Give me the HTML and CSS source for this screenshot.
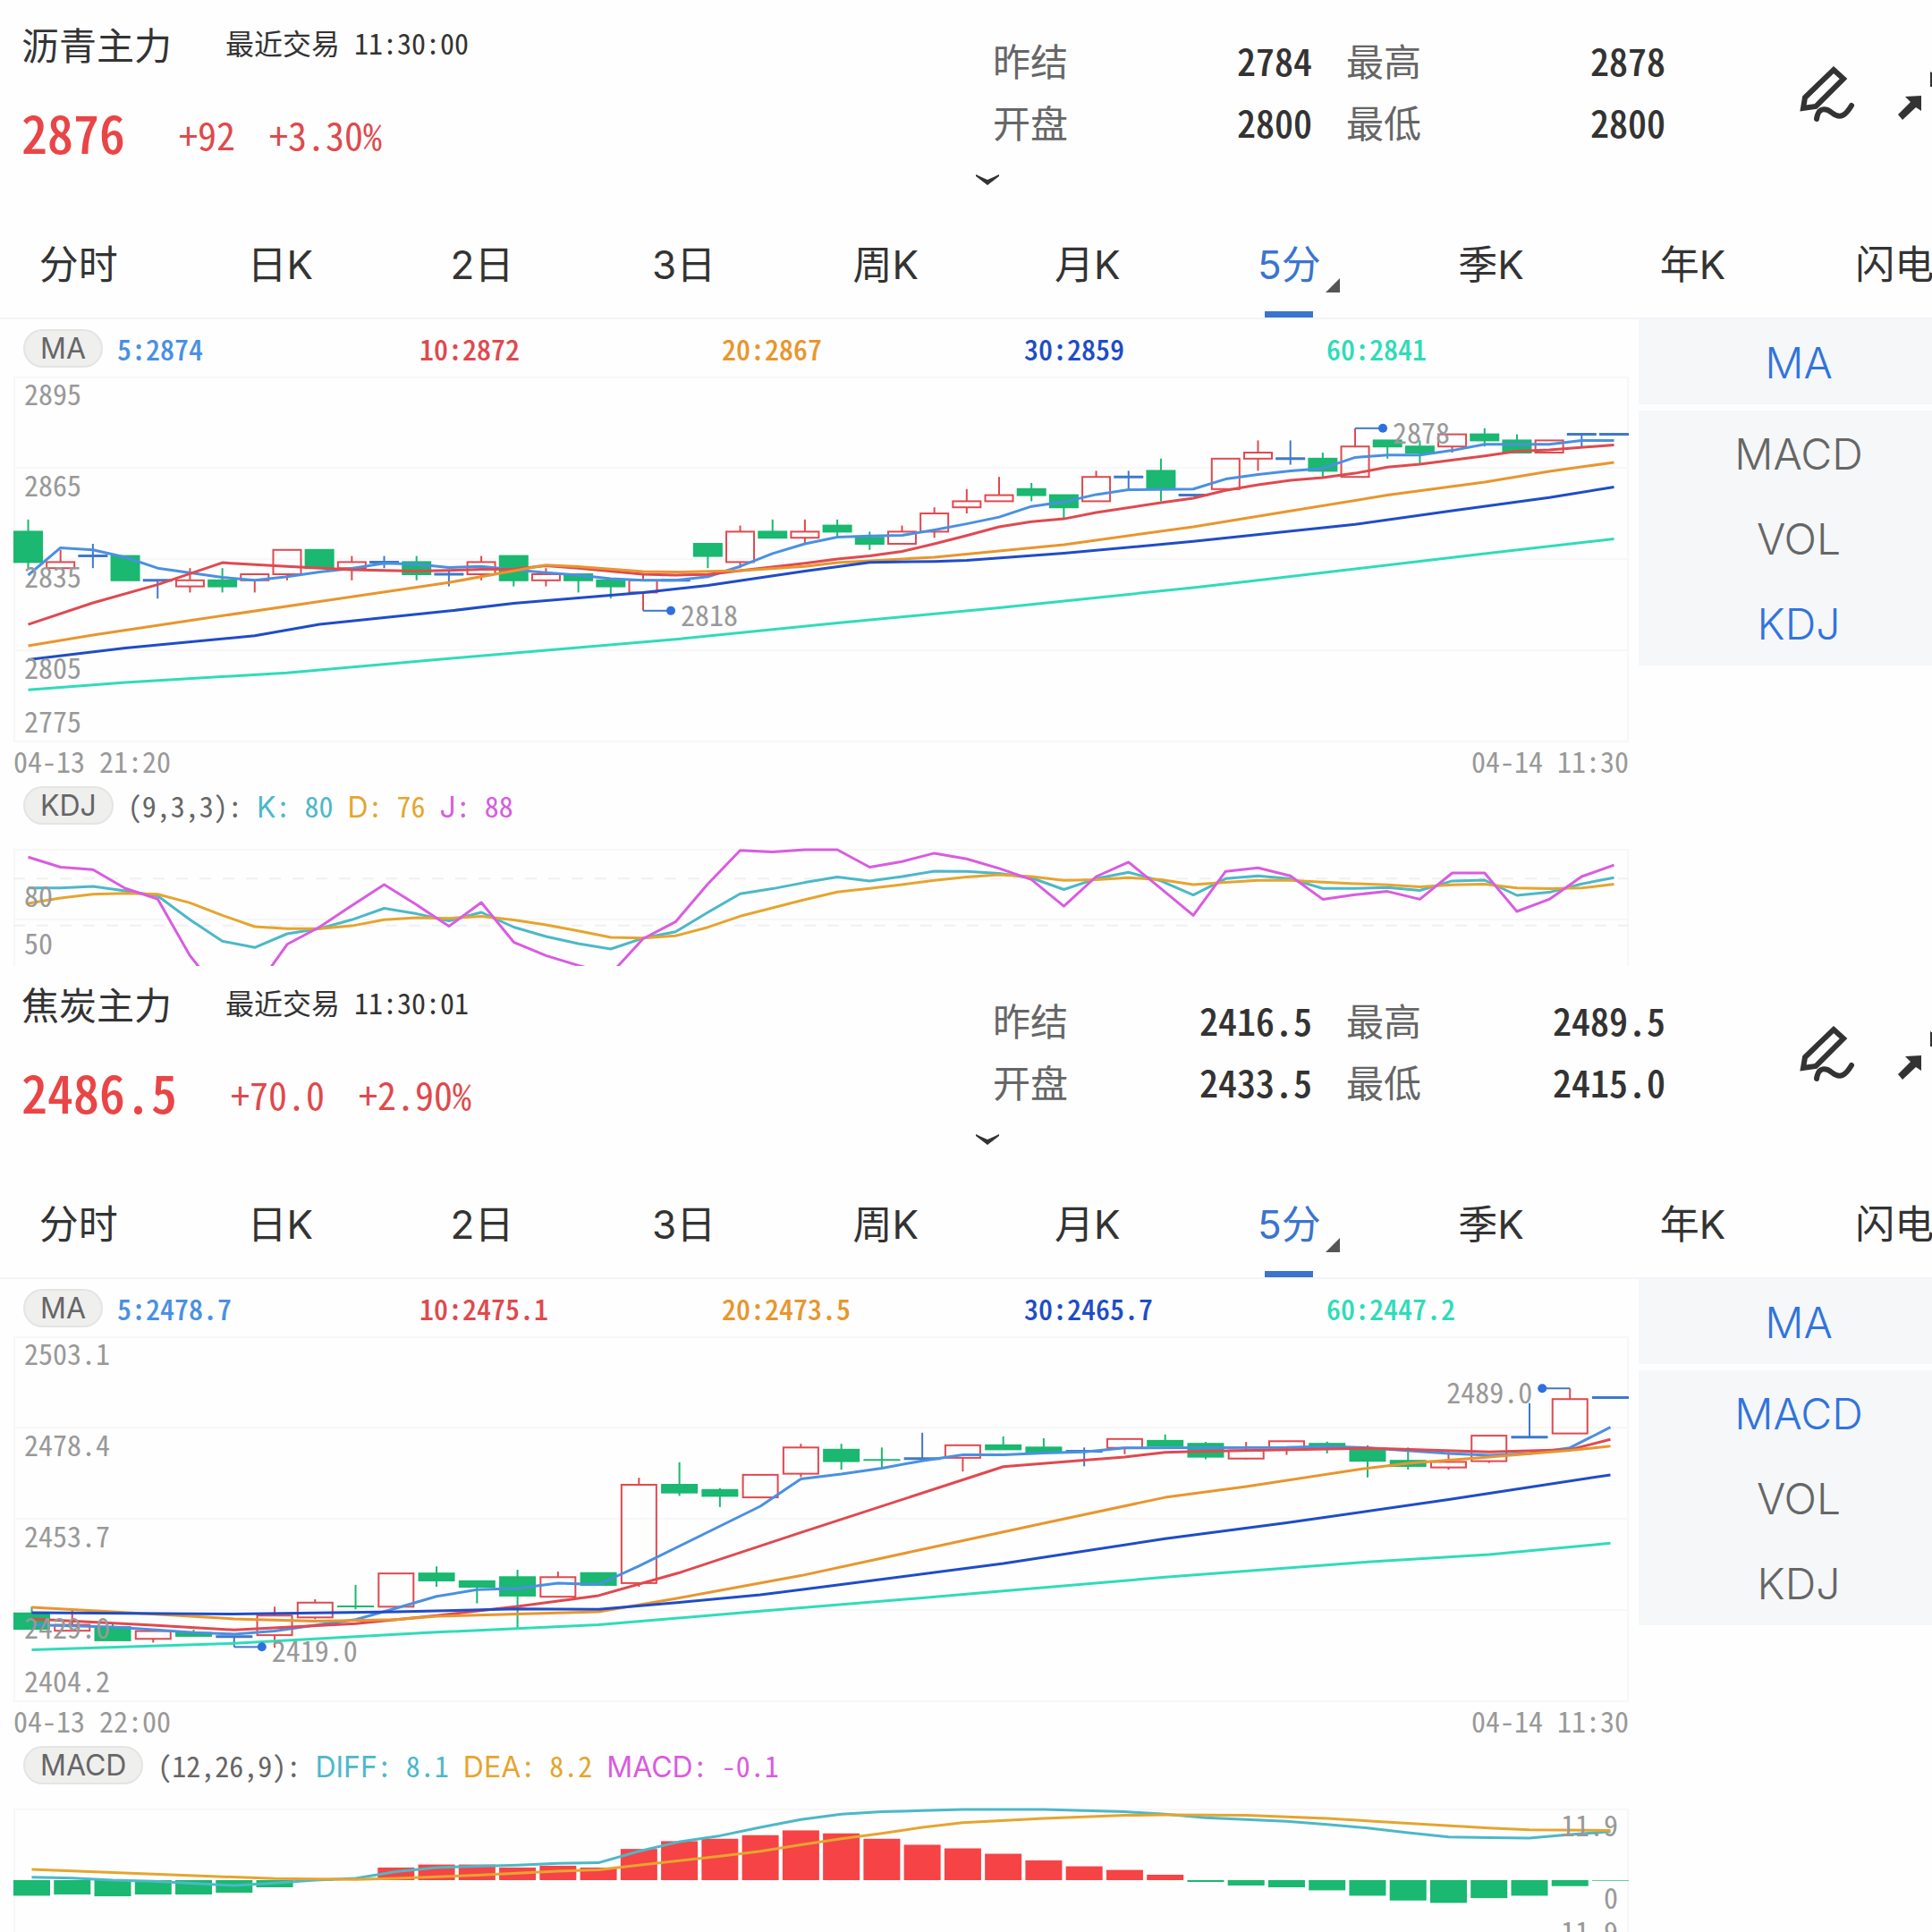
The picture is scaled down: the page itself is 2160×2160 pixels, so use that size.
FILE: index.html
```html
<!DOCTYPE html>
<html lang="zh-CN">
<head>
<meta charset="UTF-8" />
<meta name="viewport" content="width=device-width, initial-scale=1.0" />
<title>期货行情</title>
<link rel="stylesheet" href="styles.css">
</head>
<body>
  <section class="quote">
    <header class="quote-header">
      <div class="summary">
        <div class="name-row">
          <h1>沥青主力</h1>
          <p class="last-trade num">最近交易 11:30:00</p>
        </div>
        <div class="price-row num">
          <strong class="price">2876</strong>
          <span class="change">+92</span>
          <span class="change">+3.30%</span>
        </div>
      </div>
      <div class="details">
        <dl class="stats">
          <div><dt>昨结</dt><dd class="num">2784</dd></div>
          <div><dt>最高</dt><dd class="num">2878</dd></div>
          <div><dt>开盘</dt><dd class="num">2800</dd></div>
          <div><dt>最低</dt><dd class="num">2800</dd></div>
        </dl>
        <button class="expand" aria-label="展开">
          <svg width="28" height="14" viewBox="0 0 28 14"><path d="M1 1 Q7 4 14 7 Q21 4 27 1 L27 3 L14 13 L1 3 Z" fill="#333"/></svg>
        </button>
      </div>
      <div class="tools">
        <button aria-label="画线">
          <svg width="64" height="68" viewBox="0 0 64 68" fill="none" stroke="#333" stroke-width="6">
            <path d="M40 8 L51 18 L20 49 L6 51 L8 39 Z"/>
            <path d="M21 63 C23 49 32 51 38 56 C48 64 54 58 60 48" stroke-linecap="round"/>
          </svg>
        </button>
        <button aria-label="缩小">
          <svg width="66" height="66" viewBox="0 0 66 66" fill="#333">
            <path d="M8 38 L26 37 L26 54 L20 50 L5 64 L0 58 L14 44 Z"/>
            <path d="M36 10 L36 27 L54 26 L48 20 L62 6 L56 0 L42 14 Z"/>
          </svg>
        </button>
      </div>
    </header>

    <nav class="periods">
      <button>分时</button>
      <button>日K</button>
      <button>2日</button>
      <button>3日</button>
      <button>周K</button>
      <button>月K</button>
      <button class="active">5分</button>
      <button>季K</button>
      <button>年K</button>
      <button>闪电</button>
    </nav>

    <div class="board">
      <div class="charts">
        <div class="legend">
          <button class="pill">MA</button>
          <ul class="averages num">
            <li class="ma5">5:2874</li>
            <li class="ma10">10:2872</li>
            <li class="ma20">20:2867</li>
            <li class="ma30">30:2859</li>
            <li class="ma60">60:2841</li>
          </ul>
        </div>
        <svg class="chart" id="asphaltPrice" viewBox="0 0 1806 408"></svg>
        <div class="dates num"><time>04-13 21:20</time><time>04-14 11:30</time></div>
        <div class="legend sub">
          <button class="pill">KDJ</button>
          <p><span class="num">(9,3,3): </span><span class="fast">K<span class="num">: 80 </span></span><span class="slow">D<span class="num">: 76 </span></span><span class="diff">J<span class="num">: 88</span></span></p>
        </div>
        <svg class="chart" id="asphaltKdj" viewBox="0 0 1806 160"></svg>
      </div>
      <aside class="indicators">
        <div class="group">
          <button class="active">MA</button>
        </div>
        <div class="group">
          <button>MACD</button>
          <button>VOL</button>
          <button class="active">KDJ</button>
        </div>
      </aside>
    </div>
  </section>

  <section class="quote">
    <header class="quote-header">
      <div class="summary">
        <div class="name-row">
          <h1>焦炭主力</h1>
          <p class="last-trade num">最近交易 11:30:01</p>
        </div>
        <div class="price-row num">
          <strong class="price">2486.5</strong>
          <span class="change">+70.0</span>
          <span class="change">+2.90%</span>
        </div>
      </div>
      <div class="details">
        <dl class="stats">
          <div><dt>昨结</dt><dd class="num">2416.5</dd></div>
          <div><dt>最高</dt><dd class="num">2489.5</dd></div>
          <div><dt>开盘</dt><dd class="num">2433.5</dd></div>
          <div><dt>最低</dt><dd class="num">2415.0</dd></div>
        </dl>
        <button class="expand" aria-label="展开">
          <svg width="28" height="14" viewBox="0 0 28 14"><path d="M1 1 Q7 4 14 7 Q21 4 27 1 L27 3 L14 13 L1 3 Z" fill="#333"/></svg>
        </button>
      </div>
      <div class="tools">
        <button aria-label="画线">
          <svg width="64" height="68" viewBox="0 0 64 68" fill="none" stroke="#333" stroke-width="6">
            <path d="M40 8 L51 18 L20 49 L6 51 L8 39 Z"/>
            <path d="M21 63 C23 49 32 51 38 56 C48 64 54 58 60 48" stroke-linecap="round"/>
          </svg>
        </button>
        <button aria-label="缩小">
          <svg width="66" height="66" viewBox="0 0 66 66" fill="#333">
            <path d="M8 38 L26 37 L26 54 L20 50 L5 64 L0 58 L14 44 Z"/>
            <path d="M36 10 L36 27 L54 26 L48 20 L62 6 L56 0 L42 14 Z"/>
          </svg>
        </button>
      </div>
    </header>

    <nav class="periods">
      <button>分时</button>
      <button>日K</button>
      <button>2日</button>
      <button>3日</button>
      <button>周K</button>
      <button>月K</button>
      <button class="active">5分</button>
      <button>季K</button>
      <button>年K</button>
      <button>闪电</button>
    </nav>

    <div class="board">
      <div class="charts">
        <div class="legend">
          <button class="pill">MA</button>
          <ul class="averages num">
            <li class="ma5">5:2478.7</li>
            <li class="ma10">10:2475.1</li>
            <li class="ma20">20:2473.5</li>
            <li class="ma30">30:2465.7</li>
            <li class="ma60">60:2447.2</li>
          </ul>
        </div>
        <svg class="chart" id="cokePrice" viewBox="0 0 1806 408"></svg>
        <div class="dates num"><time>04-13 22:00</time><time>04-14 11:30</time></div>
        <div class="legend sub">
          <button class="pill">MACD</button>
          <p><span class="num">(12,26,9): </span><span class="fast">DIFF<span class="num">: 8.1 </span></span><span class="slow">DEA<span class="num">: 8.2 </span></span><span class="diff">MACD<span class="num">: -0.1</span></span></p>
        </div>
        <svg class="chart" id="cokeMacd" viewBox="0 0 1806 160"></svg>
      </div>
      <aside class="indicators">
        <div class="group">
          <button class="active">MA</button>
        </div>
        <div class="group">
          <button class="active">MACD</button>
          <button>VOL</button>
          <button>KDJ</button>
        </div>
      </aside>
    </div>
  </section>

<script src="charts.js"></script>
</body>
</html>
```

FILE: styles.css
```css
* {
  box-sizing: border-box;
}

body {
  margin: 0;
  background: #fefefe;
  color: #333;
  font-family: Inter, "Noto Sans CJK SC", sans-serif;
  font-size: 32px;
  overflow: hidden;
}

h1, p, dl, dd, ul {
  margin: 0;
  padding: 0;
}

button {
  background: none;
  border: none;
  padding: 0;
  color: inherit;
  font: inherit;
  cursor: pointer;
}

svg {
  display: block;
}

/* half-width figures, so prices line up in columns */
.num {
  font-family: "Noto Sans CJK SC", sans-serif;
  font-feature-settings: "hwid";
}

.quote {
  height: 50vh;
  overflow: hidden;
}

/* header */
.quote-header {
  display: grid;
  grid-template-columns: 1fr 772px 298px;
  height: 237px;
  padding-top: 22px;
}

.quote + .quote .quote-header {
  height: 230px;
  padding-top: 15px;
}

.summary {
  padding-left: 24px;
}

.name-row {
  display: flex;
  gap: 60px;
  height: 60px;
}

h1 {
  font-size: 42px;
  font-weight: 400;
  line-height: 60px;
}

.last-trade {
  line-height: 50px;
}

.price-row {
  display: flex;
  align-items: flex-start;
  gap: 38px;
  margin-top: 33px;
  line-height: 70px;
  color: #e0494b;
}

.price {
  margin-right: 22px;
  font-size: 58px;
  font-weight: 500;
  line-height: 64px;
  color: #ea4546;
}

.change {
  font-size: 42px;
}

.stats {
  display: grid;
  grid-template-columns: 1fr 1fr;
  column-gap: 38px;
  padding: 10px 0 0 20px;
  font-family: "Noto Sans CJK SC", sans-serif;
  font-size: 42px;
  line-height: 69px;
}

.stats div {
  display: flex;
  justify-content: space-between;
}

.stats dt {
  color: #666;
}

.stats dd {
  font-weight: 500;
}

.expand {
  display: block;
  margin-top: 24px;
}

.tools {
  display: flex;
  align-items: flex-start;
  gap: 48px;
  padding: 48px 0 0 148px;
}

/* period tabs */
.periods {
  display: grid;
  grid-template-columns: repeat(10, 1fr);
  margin: 0 -71px 0 -25px;
  border-bottom: 2px solid #f1f4f8;
}

.periods button {
  position: relative;
  height: 118px;
  padding-bottom: 7px;
  font-size: 44px;
}

.periods .active {
  color: #3a74cf;
}

.periods .active::before {
  content: "";
  position: absolute;
  left: 50%;
  bottom: 0;
  width: 54px;
  height: 7px;
  margin-left: -27px;
  background: #3a74cf;
}

.periods .active::after {
  content: "";
  position: absolute;
  right: 56px;
  bottom: 28px;
  border-left: 16px solid transparent;
  border-bottom: 16px solid #555;
}

/* charts + indicator list */
.board {
  display: grid;
  grid-template-columns: 1fr 328px;
}

.charts {
  padding: 0 11px 0 15px;
}

.legend {
  display: flex;
  align-items: center;
  gap: 16px;
  height: 64px;
  padding-left: 11px;
}

.pill {
  height: 43px;
  padding: 0 17px;
  border: 2px solid #e4e4e4;
  border-radius: 22px;
  background: #efefee;
  color: #666;
  line-height: 39px;
}

.averages {
  flex: 1;
  display: grid;
  grid-template-columns: repeat(5, 1fr);
  list-style: none;
  font-weight: 500;
}

.ma5 { color: #4a90e2; }
.ma10 { color: #e0494f; }
.ma20 { color: #e8962e; }
.ma30 { color: #1f4cc8; }
.ma60 { color: #2fdcb8; }

.chart {
  width: 100%;
  height: auto;
  overflow: visible;
}

.dates {
  display: flex;
  justify-content: space-between;
  line-height: 42px;
  color: #999;
}

.legend.sub {
  height: 78px;
  align-items: flex-start;
  padding-top: 8px;
  color: #666;
  line-height: 43px;
}

.sub p {
  white-space: pre;
}

.fast { color: #4cb8c8; }
.slow { color: #e5a52f; }
.diff { color: #d95ce0; }

.indicators {
  display: grid;
  gap: 7px;
  align-content: start;
}

.group {
  display: grid;
  padding-left: 30px;
  background: #f5f7f9;
}

.group button {
  height: 95px;
  padding-top: 2px;
  font-size: 48px;
  font-weight: 300;
  color: #666;
}

.group .active {
  color: #3273dc;
}

/* chart drawing */
.grid {
  fill: none;
  stroke: #f7f7f7;
  stroke-width: 2;
}

.grid.dashed {
  stroke: #f0f0f0;
  stroke-dasharray: 13 13;
}

.line {
  fill: none;
  stroke: currentColor;
  stroke-width: 3;
  stroke-linejoin: round;
}

.up {
  fill: none;
  stroke: #e0494f;
  stroke-width: 2;
}

.down {
  fill: #1ab870;
  stroke: #1ab870;
  stroke-width: 2;
}

.flat {
  fill: none;
  stroke: #3f78cc;
  stroke-width: 2;
}

.flat.body {
  stroke-width: 3;
}

.bar-up { fill: #f64346; }
.bar-down { fill: #1ab870; }

.dot {
  fill: #2f6fe0;
}

.axis {
  fill: #999;
}
```

FILE: charts.js
```javascript
const NS = 'http://www.w3.org/2000/svg';
const WIDTH = 1806;

function add(svg, tag, attrs, text) {
  const el = document.createElementNS(NS, tag);
  for (const key in attrs) el.setAttribute(key, attrs[key]);
  if (text !== undefined) el.textContent = text;
  svg.appendChild(el);
  return el;
}

// x centre of slot i when `count` bodies of `body` width fill the chart
function scaleX(count, body) {
  const pitch = (WIDTH - body) / (count - 1);
  return i => body / 2 + i * pitch;
}

function drawLine(svg, cls, points, x, y) {
  const d = points.map(p => x(p[0]).toFixed(1) + ',' + y(p[1]).toFixed(1)).join(' ');
  add(svg, 'polyline', { class: 'line ' + cls, points: d });
}

function drawLabel(svg, x, y, text, anchor) {
  add(svg, 'text', { class: 'axis num', x: x, y: y, 'text-anchor': anchor || 'start' }, text);
}

function drawPrice(id, opts) {
  const svg = document.getElementById(id);
  const x = scaleX(opts.candles.length, opts.body);
  const y = p => (opts.top - p) * opts.unit;

  add(svg, 'rect', { class: 'grid', x: 1, y: 1, width: WIDTH - 2, height: 407 });
  [102, 204, 306].forEach(v => add(svg, 'line', { class: 'grid', x1: 0, x2: WIDTH, y1: v, y2: v }));

  // candle: [type, open/close top, open/close bottom, high, low]
  opts.candles.forEach((c, i) => {
    const cls = { r: 'up', g: 'down', b: 'flat' }[c[0]];
    const cx = x(i);
    const left = cx - opts.body / 2;
    const top = y(c[1]);
    const bottom = y(c[2]);
    if (c[3] > c[1]) add(svg, 'line', { class: cls, x1: cx, x2: cx, y1: y(c[3]), y2: top });
    if (c[4] < c[2]) add(svg, 'line', { class: cls, x1: cx, x2: cx, y1: bottom, y2: y(c[4]) });
    if (c[1] === c[2]) {
      add(svg, 'line', { class: cls + ' body', x1: left, x2: left + opts.body, y1: top, y2: top });
    } else {
      add(svg, 'rect', { class: cls, x: left + 1, y: top, width: opts.body - 2, height: bottom - top });
    }
  });

  for (const name in opts.lines) drawLine(svg, name, opts.lines[name], x, y);

  opts.marks.forEach(m => {
    const cx = x(m.slot);
    const cy = y(m.price);
    const dir = m.left ? -1 : 1;
    add(svg, 'line', { class: 'flat', x1: cx, x2: cx + 31 * dir, y1: cy, y2: cy });
    add(svg, 'circle', { class: 'dot', cx: cx + 31 * dir, cy: cy, r: 5 });
    drawLabel(svg, cx + 42 * dir, cy + 17, m.text, m.left ? 'end' : 'start');
  });

  opts.labels.forEach((text, i) => drawLabel(svg, 12, i === 4 ? 398 : 32 + i * 102, text));
}

function drawKdj(id, data) {
  const svg = document.getElementById(id);
  const x = scaleX(50, 33);
  const y = v => Math.max(1, (99 - v) * 1.75);
  add(svg, 'rect', { class: 'grid', x: 1, y: 1, width: WIDTH - 2, height: 158 });
  add(svg, 'line', { class: 'grid', x1: 0, x2: WIDTH, y1: 79, y2: 79 });
  [80, 50].forEach(v => add(svg, 'line', { class: 'grid dashed', x1: 0, x2: WIDTH, y1: y(v), y2: y(v) }));
  for (const name in data) drawLine(svg, name, data[name].map((v, i) => [i, v]), x, y);
  drawLabel(svg, 12, 65, '80');
  drawLabel(svg, 12, 118, '50');
}

function drawMacd(id, bars, lines) {
  const svg = document.getElementById(id);
  const x = scaleX(40, 41);
  const y = v => 80 - v * 6.7;
  add(svg, 'rect', { class: 'grid', x: 1, y: 1, width: WIDTH - 2, height: 158 });
  bars.forEach((v, i) => {
    add(svg, 'rect', {
      class: v > 0 ? 'bar-up' : 'bar-down',
      x: x(i) - 20.5,
      y: Math.min(y(v), 80),
      width: 41,
      height: Math.abs(v) * 6.7
    });
  });
  for (const name in lines) drawLine(svg, name, lines[name], x, y);
  drawLabel(svg, 1794, 31, '11.9', 'end');
  drawLabel(svg, 1794, 112, '0', 'end');
  drawLabel(svg, 1794, 150, '-11.9', 'end');
}

drawPrice('asphaltPrice', {
  top: 2895,
  unit: 3.4,
  body: 33,
  labels: ['2895', '2865', '2835', '2805', '2775'],
  candles: [
    ['g', 2844, 2834, 2848, 2832], ['r', 2834, 2832, 2838, 2832], ['b', 2836, 2836, 2840, 2832],
    ['g', 2836, 2828, 2836, 2828], ['b', 2828, 2828, 2828, 2822], ['r', 2828, 2826, 2832, 2824],
    ['g', 2828, 2826, 2832, 2824], ['r', 2830, 2828, 2830, 2824], ['r', 2838, 2830, 2838, 2828],
    ['g', 2838, 2832, 2838, 2832], ['r', 2834, 2832, 2836, 2828], ['b', 2834, 2834, 2836, 2832],
    ['g', 2834, 2830, 2836, 2828], ['b', 2830, 2830, 2831, 2826], ['r', 2834, 2830, 2836, 2828],
    ['g', 2836, 2828, 2836, 2826], ['r', 2830, 2828, 2832, 2826], ['g', 2830, 2828, 2830, 2824],
    ['g', 2828, 2826, 2828, 2822], ['r', 2828, 2824, 2830, 2818], ['b', 2828, 2828, 2828, 2828],
    ['g', 2840, 2836, 2840, 2832], ['r', 2844, 2834, 2846, 2832], ['g', 2844, 2842, 2848, 2842],
    ['r', 2844, 2842, 2848, 2840], ['g', 2846, 2844, 2848, 2842], ['g', 2842, 2840, 2844, 2838],
    ['r', 2844, 2840, 2846, 2840], ['r', 2850, 2844, 2852, 2842], ['r', 2854, 2852, 2858, 2850],
    ['r', 2856, 2854, 2862, 2854], ['g', 2858, 2856, 2860, 2854], ['g', 2856, 2852, 2856, 2848],
    ['r', 2862, 2854, 2864, 2854], ['b', 2862, 2862, 2864, 2858], ['g', 2864, 2858, 2868, 2854],
    ['b', 2856, 2856, 2856, 2856], ['r', 2868, 2858, 2868, 2858], ['r', 2870, 2868, 2874, 2864],
    ['b', 2868, 2868, 2874, 2866], ['g', 2868, 2864, 2870, 2862], ['r', 2872, 2862, 2878, 2862],
    ['g', 2874, 2872, 2874, 2868], ['g', 2872, 2870, 2874, 2866], ['r', 2876, 2872, 2876, 2870],
    ['g', 2876, 2874, 2878, 2872], ['g', 2874, 2870, 2876, 2870], ['r', 2874, 2870, 2874, 2870],
    ['b', 2876, 2876, 2876, 2872], ['b', 2876, 2876, 2876, 2876]
  ],
  lines: {
    ma60: [[0, 2792], [3, 2794.4], [8, 2797.6], [13, 2802.3], [20, 2808.6], [25, 2814], [30, 2819], [36, 2825.6], [38, 2828], [45, 2836.8], [49, 2841.6]],
    ma5: [[0, 2829.7], [1, 2838.7], [2, 2838], [3, 2835.6], [4, 2832], [6, 2829], [7, 2828], [8, 2829.2], [9, 2830.7], [10, 2831.9], [11, 2833.6], [12, 2833.3], [13, 2832.2], [14, 2832.6], [15, 2831.5], [16, 2830.5], [17, 2829.7], [18, 2828.5], [19, 2828], [20, 2828], [21, 2829.2], [22, 2832.6], [23, 2836.8], [24, 2840], [25, 2842.2], [26, 2842.6], [27, 2842.8], [28, 2844.6], [29, 2846.6], [30, 2848.8], [31, 2852.3], [32, 2853.8], [33, 2856.2], [34, 2857.8], [36, 2858], [37, 2861.3], [38, 2862.8], [39, 2864], [40, 2864.8], [41, 2868.4], [42, 2869.2], [43, 2869.2], [44, 2870.7], [45, 2872.7], [47, 2872.7], [48, 2874], [49, 2874]],
    ma10: [[0, 2813.5], [2, 2820.6], [4, 2826.6], [6, 2833.8], [8, 2832.6], [10, 2831.5], [12, 2831], [14, 2831.6], [15, 2831.7], [16, 2832.8], [17, 2832], [19, 2830], [20, 2829.7], [21, 2829.9], [22, 2831.2], [24, 2833.6], [25, 2835], [26, 2836], [27, 2837.5], [28, 2840], [29, 2842.7], [30, 2845.6], [31, 2847.3], [32, 2848.2], [33, 2850.3], [35, 2853.5], [36, 2855], [37, 2857.6], [38, 2859.4], [39, 2860.9], [40, 2861.8], [41, 2863.2], [42, 2865.2], [43, 2866.2], [45, 2868.9], [46, 2870.4], [47, 2870.9], [49, 2872.5]],
    ma20: [[0, 2806.5], [2, 2810], [5, 2814.8], [9, 2821], [13, 2827.3], [16, 2833], [17, 2832.5], [19, 2830.9], [20, 2830.7], [22, 2831.2], [24, 2832.6], [25, 2833.8], [28, 2835.6], [32, 2839.7], [36, 2845.6], [39, 2850.8], [42, 2856], [45, 2860.3], [47, 2863.8], [49, 2866.8]],
    ma30: [[0, 2801.9], [3, 2805.7], [7, 2809.8], [9, 2813.5], [13, 2817.9], [15, 2820.4], [19, 2824], [21, 2826.3], [24, 2831], [26, 2833.9], [28, 2834.2], [29, 2834.6], [32, 2836.9], [36, 2840.8], [41, 2846.4], [44, 2850.9], [47, 2855.2], [49, 2858.7]]
  },
  marks: [
    { slot: 19, price: 2818, text: '2818' },
    { slot: 41, price: 2878, text: '2878' }
  ]
});

drawKdj('asphaltKdj', {
  fast: [74, 74, 75, 72.2, 69, 53.7, 40, 36, 44.7, 48, 53.7, 61, 57.5, 53, 58.4, 49, 43, 38.4, 35, 42, 46, 58.4, 70.3, 73.5, 77.5, 81, 78.5, 81.3, 84.8, 84.6, 83.2, 80.4, 73, 80, 84, 78.5, 69.5, 80, 81.7, 79.8, 73.7, 73.7, 74.3, 72.4, 78.5, 79, 69.3, 71.2, 76.6, 80.6],
  slow: [64.2, 67.6, 70, 70.6, 70, 64.5, 56.5, 49.3, 48, 48, 49.8, 53.7, 55, 54.6, 55.8, 53.5, 50.4, 46.6, 42.4, 42, 43.4, 48.9, 56, 61.3, 66.6, 71.4, 73.7, 76.2, 78.9, 81, 82.5, 81.3, 78.9, 79.2, 80.6, 79.2, 76.2, 77.5, 78.9, 78.9, 77.7, 76.8, 76, 74.7, 76, 76.4, 74, 73.5, 74, 76.4],
  diff: [93.7, 87.3, 85.7, 73.7, 67, 30.8, 4.6, 8.8, 38, 49, 62.8, 76.2, 63.2, 49.5, 64.7, 39.4, 30.8, 24.5, 19, 41.6, 52.3, 76.6, 98, 97, 99.5, 99.5, 87.3, 90.9, 96.2, 92.6, 86.5, 79.4, 62.3, 81.3, 90.5, 73.7, 56.5, 84.6, 86.9, 81.7, 66.8, 69.7, 71.8, 66.8, 83.6, 83.6, 59, 66.8, 81.3, 88.6]
});

drawPrice('cokePrice', {
  top: 2503.1,
  unit: 4.13,
  body: 41,
  labels: ['2503.1', '2478.4', '2453.7', '2429.0', '2404.2'],
  candles: [
    ['g', 2428.1, 2423.9, 2429.9, 2423.9], ['r', 2425, 2423.4, 2429, 2423.4], ['g', 2424.4, 2420.8, 2425.6, 2420.8],
    ['r', 2423.3, 2421.2, 2423.3, 2420.2], ['g', 2422.8, 2422, 2423.7, 2422], ['b', 2421.8, 2421.8, 2421.8, 2419],
    ['r', 2427.5, 2422.2, 2429.9, 2418.8], ['r', 2431, 2427, 2431.9, 2426.5], ['g', 2430, 2430, 2435.8, 2429.2],
    ['r', 2438.9, 2429.9, 2438.9, 2429.9], ['g', 2438.9, 2437, 2440.8, 2435.3], ['g', 2436.8, 2435.3, 2436.8, 2430.8],
    ['g', 2437.9, 2432.9, 2439.9, 2423.9], ['r', 2437.9, 2432.6, 2439.4, 2432.6], ['g', 2439, 2435.8, 2439, 2435.8],
    ['r', 2462.9, 2436.3, 2464.8, 2435.3], ['g', 2462.9, 2460.8, 2469, 2459.9], ['g', 2461.5, 2459.9, 2462, 2456.9],
    ['r', 2465.6, 2459.5, 2465.6, 2459.5], ['r', 2473, 2465.9, 2474, 2465], ['g', 2472.4, 2469.3, 2474, 2467],
    ['g', 2469.6, 2469.6, 2473, 2467.5], ['b', 2470, 2470, 2477, 2469.2], ['r', 2473.6, 2470.2, 2473.6, 2466.5],
    ['g', 2473.6, 2472.5, 2476, 2472.5], ['g', 2473, 2471.8, 2475.5, 2471.8], ['b', 2472, 2472, 2473, 2467.9],
    ['r', 2475.3, 2472.9, 2475.3, 2471.2], ['g', 2474.8, 2473.5, 2476.5, 2473.5], ['g', 2474, 2470.5, 2474.5, 2469.8],
    ['r', 2472.2, 2470, 2474.5, 2469.8], ['r', 2474.7, 2473, 2474.7, 2471], ['g', 2474, 2473.1, 2474.6, 2471.4],
    ['g', 2472.4, 2469.4, 2473.6, 2464.9], ['g', 2469.4, 2468, 2473, 2467], ['r', 2469.1, 2467.6, 2471.8, 2467],
    ['r', 2476.2, 2469.3, 2476.2, 2468.8], ['b', 2475.8, 2475.8, 2485, 2475.8], ['r', 2486.1, 2476.8, 2489, 2476.8],
    ['b', 2486.5, 2486.5, 2486.5, 2486.5]
  ],
  lines: {
    ma60: [[0, 2418.2], [5, 2420], [10, 2423], [14, 2425], [18, 2428.7], [22, 2432.3], [28, 2437.9], [33, 2442], [36, 2444], [39, 2447.1]],
    ma5: [[0, 2425], [2, 2424.4], [3, 2423.7], [4, 2422.9], [5, 2422.5], [6, 2423.3], [7, 2424.9], [8, 2426.4], [9, 2429.5], [10, 2432.7], [11, 2434.5], [12, 2434.9], [13, 2436.3], [14, 2435.9], [15, 2440.9], [18, 2457.1], [19, 2464.5], [20, 2465.8], [21, 2467.4], [22, 2469.4], [23, 2471], [24, 2471], [25, 2471.5], [26, 2471.8], [27, 2472.9], [31, 2473], [32, 2473.3], [33, 2472.9], [35, 2471.4], [36, 2470.9], [37, 2471.4], [38, 2472.9], [39, 2478.5]],
    ma10: [[0, 2426.6], [3, 2424.9], [5, 2423.6], [8, 2425.3], [10, 2427.5], [12, 2430], [14, 2432.9], [16, 2439.1], [19, 2450], [24, 2467.8], [26, 2469.6], [27, 2470.4], [28, 2471.7], [29, 2472], [33, 2472.8], [36, 2471.8], [38, 2472.4], [39, 2475.2]],
    ma20: [[0, 2429.7], [2, 2428.5], [5, 2426.6], [7, 2426], [9, 2426.4], [10, 2427.3], [12, 2427.9], [14, 2428.5], [16, 2432.3], [19, 2438.3], [22, 2445.4], [25, 2452.5], [28, 2459.5], [30, 2462.4], [33, 2467.4], [34, 2468.7], [36, 2470.4], [38, 2472.2], [39, 2473.4]],
    ma30: [[0, 2428.3], [5, 2427.9], [9, 2428.5], [12, 2429.3], [14, 2429.2], [16, 2431.1], [18, 2433.1], [20, 2435.9], [24, 2441.6], [28, 2448.3], [31, 2452.6], [35, 2458.9], [39, 2465.6]]
  },
  marks: [
    { slot: 5, price: 2419, text: '2419.0' },
    { slot: 38, price: 2489, text: '2489.0', left: true }
  ]
});

drawMacd('cokeMacd',
  [-2.6, -2.4, -2.7, -2.4, -2.4, -2.1, -1.2, -0.1, 0.1, 2.1, 2.6, 2.6, 2.1, 2.4, 2.1, 5.2, 6.5, 6.9, 7.5, 8.3, 7.8, 6.9, 5.9, 5.3, 4.4, 3.3, 2.3, 1.7, 0.9, -0.3, -0.9, -1.2, -1.7, -2.6, -3.4, -3.8, -3, -2.6, -1, -0.1],
  {
    fast: [[0, 0.5], [1, 0.35], [2, 0], [3, -0.2], [5, -0.9], [6, -0.5], [7, 0], [8, 0.3], [9, 1.4], [10, 2.1], [12, 2.5], [13, 2.8], [14, 2.9], [15, 4.8], [16, 6.4], [17, 7.4], [18, 8.8], [19, 10.1], [20, 11], [21, 11.4], [22, 11.6], [23, 11.8], [25, 11.8], [26, 11.6], [27, 11.4], [28, 11], [29, 10.4], [30, 10.1], [31, 9.8], [32, 9.3], [33, 8.7], [34, 7.9], [35, 7.2], [36, 7.1], [37, 7], [38, 7.6], [39, 8.1]],
    slow: [[0, 1.8], [3, 1], [6, 0.25], [8, 0.1], [9, 0.3], [11, 0.8], [13, 1.5], [14, 1.7], [15, 2.5], [17, 4], [18, 4.8], [19, 5.9], [20, 6.9], [21, 7.8], [22, 8.8], [23, 9.6], [25, 10.3], [27, 10.8], [28, 10.9], [30, 10.8], [32, 10.3], [34, 9.5], [36, 8.7], [37, 8.4], [39, 8.3]]
  }
);
```
